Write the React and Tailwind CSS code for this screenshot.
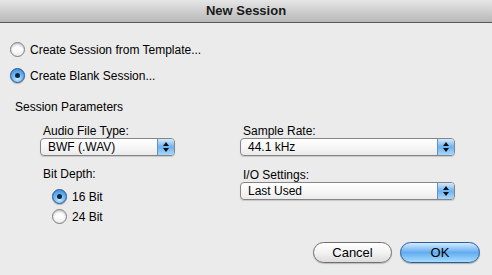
import React from "react";

const Radio = ({ checked }) =>
  checked ? (
    <span className="relative flex h-[15px] w-[15px] shrink-0 items-center justify-center rounded-full border border-[#27558f] bg-[radial-gradient(circle_at_50%_75%,#c9ecff_0%,#6fb6f2_45%,#2f7fd6_100%)] shadow-[0_1px_1px_rgba(0,0,0,0.25)]">
      <span className="h-[5px] w-[5px] rounded-full bg-[#10233f]" />
    </span>
  ) : (
    <span className="h-[15px] w-[15px] shrink-0 rounded-full border border-[#7d7d7d] bg-gradient-to-b from-[#f4f4f4] via-[#ffffff] to-[#ececec] shadow-[inset_0_1px_2px_rgba(0,0,0,0.25)]" />
  );

const Popup = ({ value, width }) => (
  <div
    className={`flex h-[18px] items-stretch overflow-hidden rounded-[4px] border border-[#858585] bg-gradient-to-b from-[#ffffff] via-[#f7f7f7] to-[#eaeaea] shadow-[0_1px_1px_rgba(0,0,0,0.15)] ${width}`}
  >
    <span className="flex flex-1 items-center pl-[7px] text-[12px] leading-none text-black">
      {value}
    </span>
    <span className="flex w-[17px] flex-col items-center justify-center gap-[2px] border-l border-[#6c8fb8] bg-gradient-to-b from-[#d4e9fc] via-[#6cb2f0] to-[#a9d8fc]">
      <span className="h-0 w-0 border-x-[3px] border-b-[4px] border-x-transparent border-b-[#111]" />
      <span className="h-0 w-0 border-x-[3px] border-t-[4px] border-x-transparent border-t-[#111]" />
    </span>
  </div>
);

export default function App() {
  return (
    <div className="flex h-[275px] w-[492px] flex-col bg-[#ebebeb] font-['Liberation_Sans',Arial,sans-serif] text-[12px] text-black">
      {/* title bar */}
      <div className="flex h-[23px] shrink-0 items-center justify-center border-b border-[#565656] bg-gradient-to-b from-[#e6e6e6] to-[#b8b8b8] text-[13px] font-bold text-[#1a1a1a]">
        New Session
      </div>

      <div className="flex flex-1 flex-col">
        <label className="ml-[10px] mt-[19px] flex h-[15px] items-center gap-[5px] leading-none">
          <Radio />
          <span>Create Session from Template...</span>
        </label>
        <label className="ml-[10px] mt-[11px] flex h-[15px] items-center gap-[5px] leading-none">
          <Radio checked />
          <span>Create Blank Session...</span>
        </label>

        <div className="ml-[15px] mt-[17px] h-[14px] leading-[14px]">Session Parameters</div>

        <div className="mt-[10px] flex">
          <div className="ml-[40px] flex w-[135px] flex-col">
            <div className="ml-[3px] h-[14px] leading-[14px]">Audio File Type:</div>
            <Popup value="BWF (.WAV)" width="w-[135px]" />
            <div className="ml-[3px] mt-[11px] h-[14px] leading-[14px]">Bit Depth:</div>
            <label className="ml-[12px] mt-[8px] flex h-[15px] items-center gap-[5px] leading-none">
              <Radio checked />
              <span>16 Bit</span>
            </label>
            <label className="ml-[12px] mt-[5px] flex h-[15px] items-center gap-[5px] leading-none">
              <Radio />
              <span>24 Bit</span>
            </label>
          </div>

          <div className="ml-[65px] flex w-[215px] flex-col">
            <div className="ml-[3px] h-[14px] leading-[14px]">Sample Rate:</div>
            <Popup value="44.1 kHz" width="w-[215px]" />
            <div className="ml-[3px] mt-[12px] h-[14px] leading-[14px]">I/O Settings:</div>
            <Popup value="Last Used" width="w-[215px]" />
          </div>
        </div>

        <div className="mr-[12px] mt-auto mb-[12px] flex justify-end gap-[8px]">
          <button className="flex h-[21px] w-[79px] items-center justify-center rounded-full border border-[#6f6f6f] bg-gradient-to-b from-[#ffffff] via-[#f3f3f3] to-[#dcdcdc] text-[13px] text-black shadow-[0_1px_1px_rgba(0,0,0,0.2)]">
            Cancel
          </button>
          <button className="flex h-[21px] w-[80px] items-center justify-center rounded-full border border-[#2a5d99] bg-gradient-to-b from-[#d2ebff] via-[#62acef] to-[#a6dcff] text-[13px] text-black shadow-[0_1px_1px_rgba(0,0,0,0.25)]">
            OK
          </button>
        </div>
      </div>
    </div>
  );
}
